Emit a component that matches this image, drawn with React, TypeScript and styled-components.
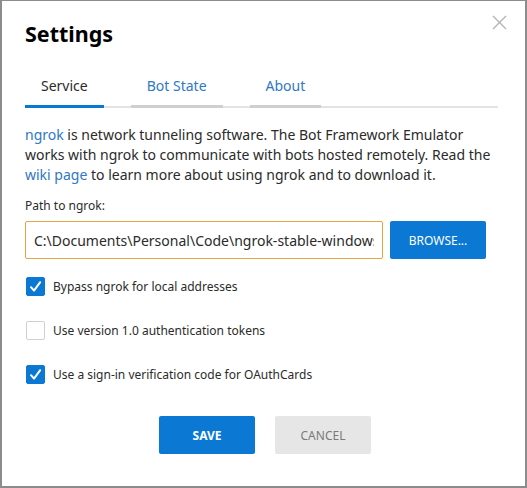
import styled, { createGlobalStyle } from "styled-components";

const GlobalStyle = createGlobalStyle`
  html, body {
    margin: 0;
    padding: 0;
    background: #ffffff;
  }
  * {
    box-sizing: border-box;
  }
`;

const FONT = `"Segoe UI", "Noto Sans", "Open Sans", sans-serif`;

type Option = { label: string; checked: boolean };

const options: Option[] = [
  { label: "Bypass ngrok for local addresses", checked: true },
  { label: "Use version 1.0 authentication tokens", checked: false },
  { label: "Use a sign-in verification code for OAuthCards", checked: true },
];

const tabs = ["Service", "Bot State", "About"];

const CheckIcon = () => (
  <svg width="13" height="13" viewBox="0 0 13 13" fill="none">
    <path d="M2 7.2 L5 10.6 L11.2 2.2" stroke="#ffffff" strokeWidth="2" strokeLinecap="round" strokeLinejoin="round" />
  </svg>
);

const App = () => {
  return (
    <>
      <GlobalStyle />
      <StDialog>
        <StClose type="button" aria-label="close">
          <svg width="15" height="15" viewBox="0 0 15 15">
            <path d="M1 1 L14 14 M14 1 L1 14" stroke="#b4b4b4" strokeWidth="1.4" />
          </svg>
        </StClose>
        <StTitle>Settings</StTitle>
        <StTabBar>
          {tabs.map((tab, i) => (
            <StTab key={tab} $active={i === 0}>
              {tab}
            </StTab>
          ))}
        </StTabBar>
        <StText>
          <StLink>ngrok</StLink> is network tunneling software. The Bot Framework Emulator
          <br />
          works with ngrok to communicate with bots hosted remotely. Read the
          <br />
          <StLink>wiki page</StLink> to learn more about using ngrok and to download it.
        </StText>
        <StLabel>Path to ngrok:</StLabel>
        <StPathRow>
          <StInput readOnly value="C:\Documents\Personal\Code\ngrok-stable-windows-amd64\ngrok.exe" />
          <StBrowse type="button">BROWSE...</StBrowse>
        </StPathRow>
        <StOptions>
          {options.map((opt) => (
            <StOption key={opt.label}>
              <StBox $checked={opt.checked}>{opt.checked && <CheckIcon />}</StBox>
              {opt.label}
            </StOption>
          ))}
        </StOptions>
        <StFooter>
          <StButton type="button" $primary>
            SAVE
          </StButton>
          <StButton type="button">CANCEL</StButton>
        </StFooter>
      </StDialog>
    </>
  );
};

export default App;

const StDialog = styled.div`
  position: relative;
  width: 527px;
  height: 488px;
  padding: 17px 27px 0 23px;
  border: 2px solid #8c8c8c;
  border-top-width: 1px;
  background: #ffffff;
  font-family: ${FONT};
  color: #333333;
`;

const StClose = styled.button`
  position: absolute;
  top: 14px;
  right: 18px;
  padding: 0;
  border: none;
  background: none;
  line-height: 0;
`;

const StTitle = styled.h1`
  margin: 0;
  font-size: 21.5px;
  line-height: 32px;
  font-weight: 700;
  color: #000000;
`;

const StTabBar = styled.div`
  display: flex;
  gap: 27px;
  margin-top: 19px;
  border-bottom: 2px solid #e3e3e3;
`;

const StTab = styled.div<{ $active?: boolean }>`
  margin-bottom: -2px;
  padding: 7px 16px 9px;
  font-size: 14px;
  line-height: 20px;
  color: ${({ $active }) => ($active ? "#2b2b2b" : "#2f78c4")};
  border-bottom: 3px solid ${({ $active }) => ($active ? "#0b78d0" : "#cfcfcf")};
`;

const StText = styled.p`
  margin: 17px 0 0;
  font-size: 14px;
  line-height: 20px;
  color: #2b2b2b;
  white-space: nowrap;
`;

const StLink = styled.span`
  color: #2f78c4;
`;

const StLabel = styled.div`
  margin-top: 12px;
  font-size: 12px;
  line-height: 18px;
  color: #2b2b2b;
`;

const StPathRow = styled.div`
  display: flex;
  gap: 7px;
  margin-top: 6px;
`;

const StInput = styled.input`
  width: 358px;
  height: 38px;
  padding: 0 8px;
  border: 1px solid #e5a640;
  border-radius: 2px;
  outline: none;
  font-family: ${FONT};
  font-size: 14px;
  color: #2b2b2b;
`;

const StBrowse = styled.button`
  width: 96px;
  height: 38px;
  border: none;
  border-radius: 2px;
  background: #0b78d4;
  color: #ffffff;
  font-family: ${FONT};
  font-size: 12px;
`;

const StOptions = styled.div`
  display: flex;
  flex-direction: column;
  gap: 20px;
  margin-top: 15px;
`;

const StOption = styled.label`
  display: flex;
  align-items: center;
  gap: 8px;
  height: 24px;
  padding-left: 1px;
  font-size: 12px;
  color: #2b2b2b;
`;

const StBox = styled.span<{ $checked: boolean }>`
  display: flex;
  align-items: center;
  justify-content: center;
  width: 19px;
  height: 19px;
  border-radius: 2px;
  border: 1px solid ${({ $checked }) => ($checked ? "#0b78d4" : "#d0d0d0")};
  background: ${({ $checked }) => ($checked ? "#0b78d4" : "#ffffff")};
`;

const StFooter = styled.div`
  display: flex;
  justify-content: center;
  gap: 20px;
  margin-top: 30px;
  padding-left: 7px;
`;

const StButton = styled.button<{ $primary?: boolean }>`
  width: 96px;
  height: 38px;
  border: none;
  border-radius: 2px;
  background: ${({ $primary }) => ($primary ? "#0b78d4" : "#e6e6e6")};
  color: ${({ $primary }) => ($primary ? "#ffffff" : "#7a7a7a")};
  font-family: ${FONT};
  font-size: 12px;
  font-weight: ${({ $primary }) => ($primary ? 700 : 400)};
`;
